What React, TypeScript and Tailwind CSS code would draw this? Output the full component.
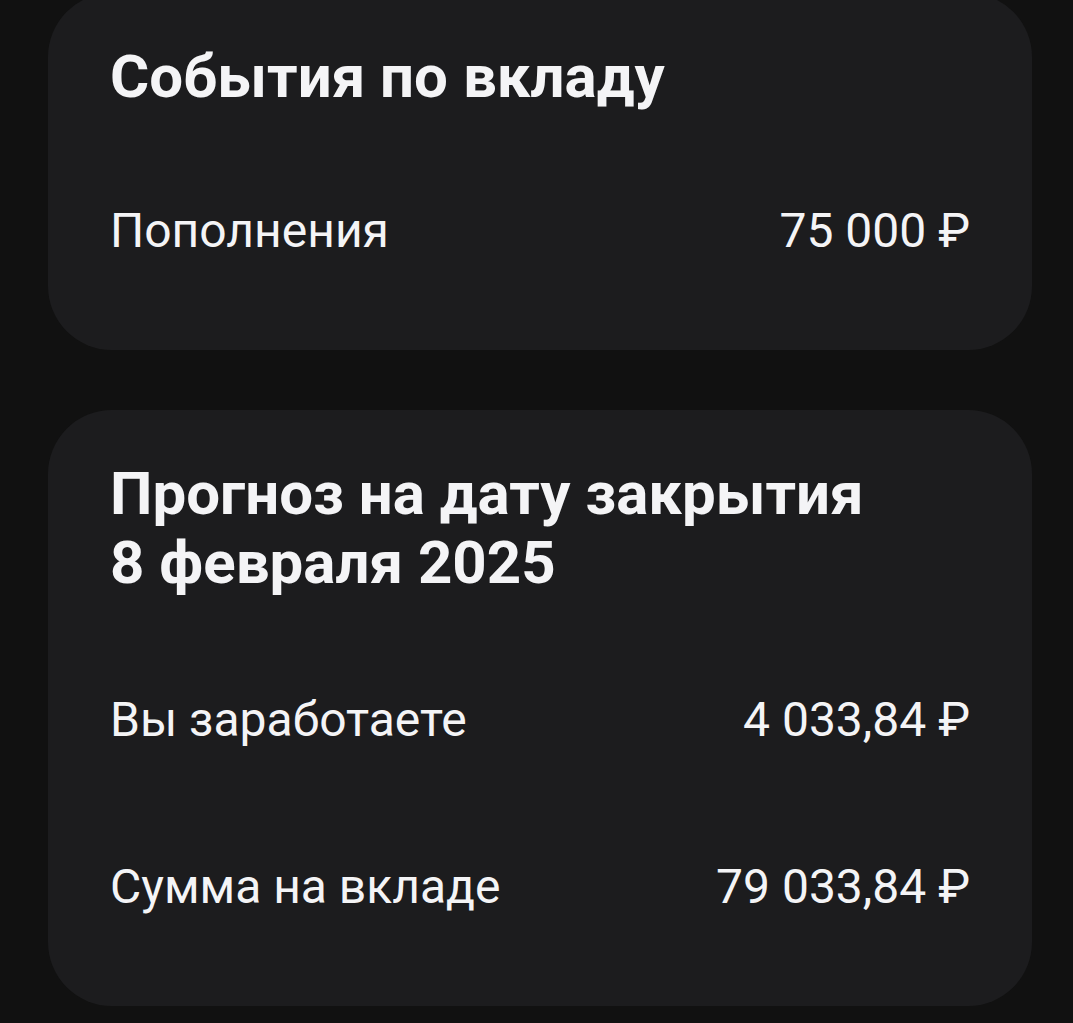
import React from 'react';

type Row = { label: string; value: string };

function Card({ title, rows, titleGap }: { title: React.ReactNode; rows: Row[]; titleGap: string }) {
  return (
    <section className="w-[984px] rounded-[64px] bg-[#1c1c1e] px-[62px] pt-[49px] pb-[91px]">
      <h2 className="text-[60px] font-bold leading-[69px] text-[#f4f4f6]">{title}</h2>
      <div className={titleGap}>
        {rows.map((row, i) => (
          <div
            key={row.label}
            className={`flex items-center justify-between text-[48px] leading-[56px] text-[#f4f4f6] ${i > 0 ? 'mt-[111px]' : ''}`}
          >
            <span>{row.label}</span>
            <span>{row.value}</span>
          </div>
        ))}
      </div>
    </section>
  );
}

export default function App() {
  return (
    <main
      className="min-h-screen overflow-hidden bg-[#111111] pl-[48px]"
      style={{ fontFamily: 'Roboto, "Noto Sans", sans-serif' }}
    >
      <div className="mt-[-7px] flex flex-col gap-[60px]">
        <Card
          title="События по вкладу"
          titleGap="mt-[92px]"
          rows={[{ label: 'Пополнения', value: '75 000 ₽' }]}
        />
        <Card
          title={
            <>
              Прогноз на дату закрытия
              <br />8 февраля 2025
            </>
          }
          titleGap="mt-[95px]"
          rows={[
            { label: 'Вы заработаете', value: '4 033,84 ₽' },
            { label: 'Сумма на вкладе', value: '79 033,84 ₽' },
          ]}
        />
      </div>
    </main>
  );
}
